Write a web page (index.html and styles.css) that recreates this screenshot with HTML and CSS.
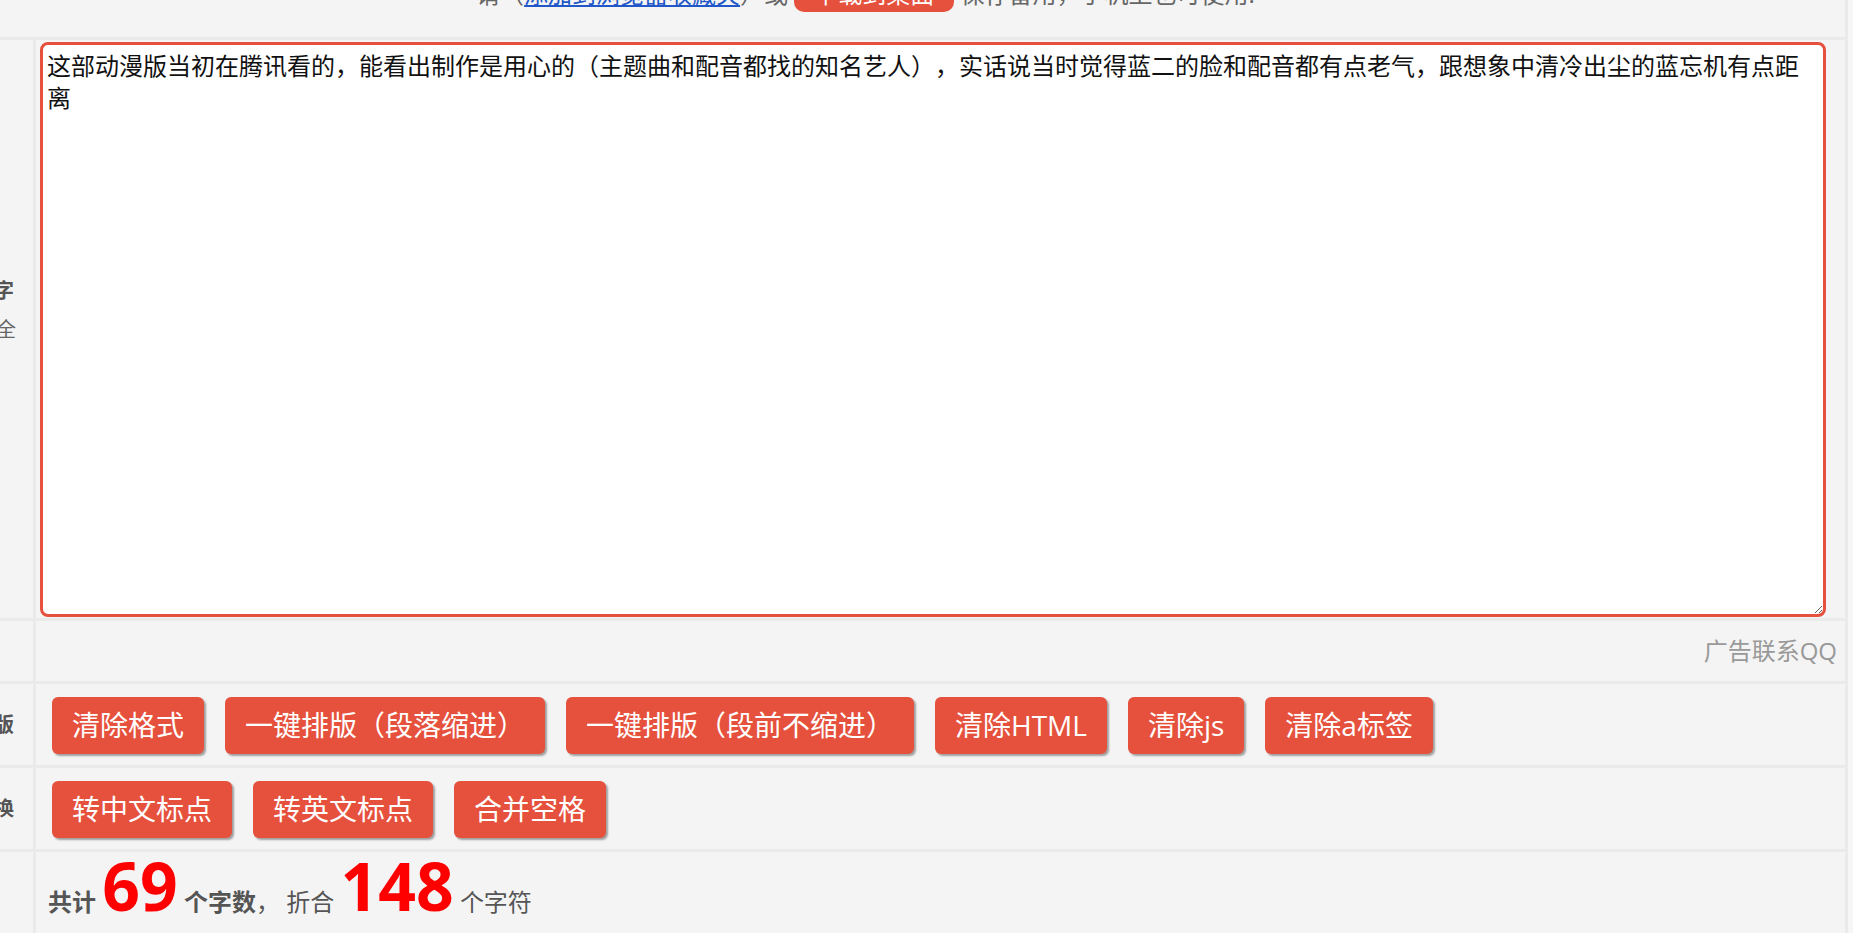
FILE: index.html
```html
<!DOCTYPE html>
<html lang="zh-CN">
<head>
  <meta charset="UTF-8">
  <meta name="viewport" content="width=device-width, initial-scale=1.0">
  <title>在线字数统计</title>
  <link rel="stylesheet" href="styles.css">
</head>
<body>
  <div class="frame">
    <div class="notice">
      请（<a href="#">添加到浏览器收藏夹</a>）或 <span class="dl">下载到桌面</span> 保存备用，手机上也可使用.
    </div>

    <div class="row">
      <div class="label">
        <div>
          <b>粘贴文字</b><br>
          <span class="tip">（双击全<br>选）</span>
        </div>
      </div>
      <div class="cell editor">
        <textarea id="content">这部动漫版当初在腾讯看的，能看出制作是用心的（主题曲和配音都找的知名艺人），实话说当时觉得蓝二的脸和配音都有点老气，跟想象中清冷出尘的蓝忘机有点距离</textarea>
      </div>
    </div>

    <div class="row">
      <div class="label"></div>
      <div class="cell ad">广告联系QQ</div>
    </div>

    <div class="row">
      <div class="label"><b>一键排版</b></div>
      <div class="cell tools">
        <button class="btn">清除格式</button>
        <button class="btn">一键排版（段落缩进）</button>
        <button class="btn">一键排版（段前不缩进）</button>
        <button class="btn">清除HTML</button>
        <button class="btn">清除js</button>
        <button class="btn">清除a标签</button>
      </div>
    </div>

    <div class="row">
      <div class="label"><b>标点转换</b></div>
      <div class="cell tools">
        <button class="btn">转中文标点</button>
        <button class="btn">转英文标点</button>
        <button class="btn">合并空格</button>
      </div>
    </div>

    <div class="row">
      <div class="label"><b>统计</b></div>
      <div class="cell count">
        <b>共计</b> <span class="num">69</span> <b>个字数</b>， 折合 <span class="num">148</span> 个字符
      </div>
    </div>
  </div>
</body>
</html>
```

FILE: styles.css
```css
body {
  margin: 0;
  background: #f6f6f6;
  font-family: "Open Sans", "Noto Sans CJK SC", sans-serif;
  font-size: 24px;
  color: #555;
  text-spacing-trim: space-all;
  overflow: hidden;
}
.frame {
  margin: -34px 5px 0 -114px;
  background: #f4f4f4;
  border-right: 3px solid #eaeaea;
}
.notice {
  padding: 10px 0 25px;
  line-height: 36px;
  text-align: center;
  color: #666;
}
.notice a {
  color: #2157c8;
}
.dl {
  display: inline-block;
  padding: 0 20px;
  line-height: 36px;
  background: #e6513d;
  color: #fff;
  border-radius: 10px;
}
.row {
  display: grid;
  grid-template-columns: 150px 1fr;
  border-top: 3px solid #eaeaea;
}
.label {
  display: flex;
  align-items: center;
  justify-content: center;
  padding-left: 29px;
  border-right: 3px solid #eaeaea;
  font-size: 20px;
  line-height: 39px;
  text-align: center;
  white-space: nowrap;
  color: #555;
}
.label .tip {
  font-weight: normal;
  letter-spacing: 2px;
  color: #666;
}
.editor {
  padding: 2px 19px 1px 4px;
}
.editor textarea {
  display: block;
  box-sizing: border-box;
  width: 100%;
  height: 575px;
  margin: 0;
  padding: 5px 4px;
  border: 3px solid #e6513d;
  border-radius: 8px;
  outline: none;
  font-family: "Open Sans", "Noto Sans CJK SC", sans-serif;
  font-size: 24px;
  line-height: 32px;
  color: #111;
  background: #fff;
  text-spacing-trim: space-all;
}
.ad {
  height: 60px;
  padding-right: 8px;
  line-height: 60px;
  text-align: right;
  color: #999;
}
.tools {
  display: flex;
  gap: 21px;
  padding: 13px 16px 11px;
}
.btn {
  margin: 0;
  padding: 10px 20px;
  border: none;
  border-radius: 6px;
  background: #e6513d;
  color: #fff;
  font-family: "Open Sans", "Noto Sans CJK SC", sans-serif;
  font-size: 28px;
  line-height: 37px;
  box-shadow: 2px 2px 2px rgba(0, 0, 0, .35);
  text-spacing-trim: space-all;
  cursor: pointer;
}
.count {
  padding: 0 12px 20px;
  line-height: 1.2;
  color: #555;
}
.count .num {
  font-size: 66px;
  font-weight: bold;
  line-height: 1;
  color: #f00;
}
```
